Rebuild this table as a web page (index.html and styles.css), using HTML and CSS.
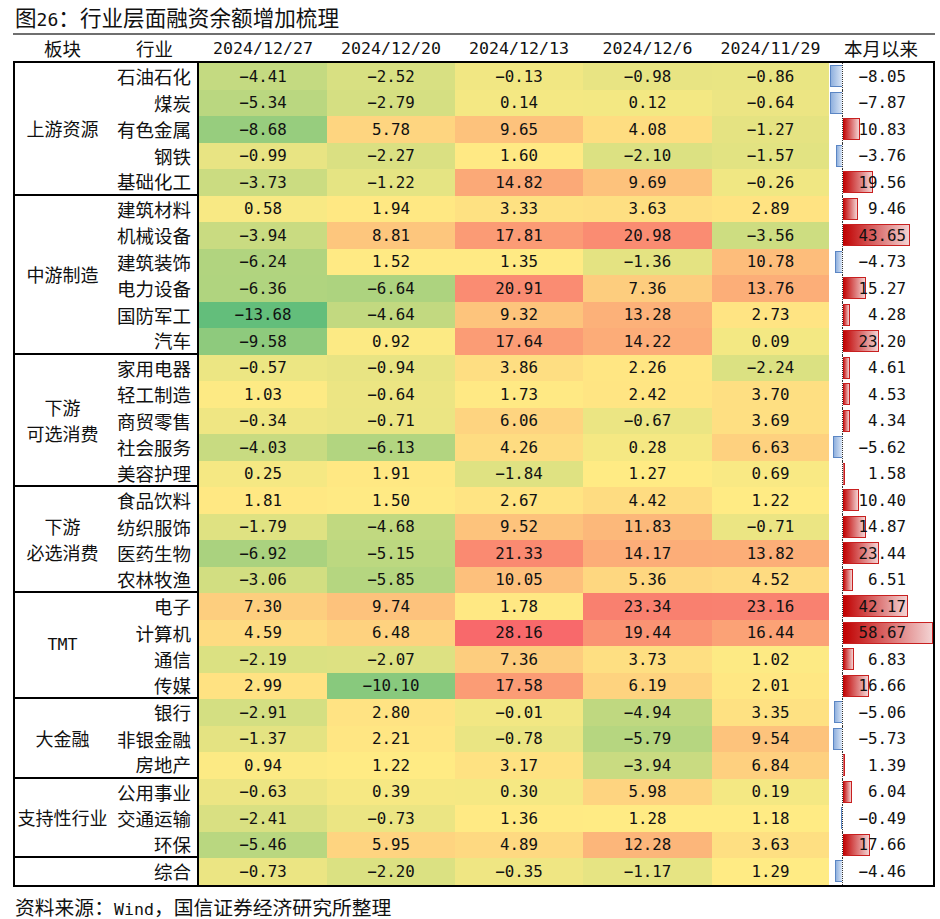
FILE: index.html
```html
<!DOCTYPE html>
<html lang="zh-CN">
<head>
<meta charset="utf-8">
<title>图26：行业层面融资余额增加梳理</title>
<link rel="stylesheet" href="styles.css">
</head>
<body>
<div class="page">
  <div class="title">图<span class="mono t">26</span>：行业层面融资余额增加梳理</div>

  <div class="grid thead">
    <div class="th">板块</div>
    <div class="th">行业</div>
    <div class="th d">2024/12/27</div>
    <div class="th d">2024/12/20</div>
    <div class="th d">2024/12/13</div>
    <div class="th d">2024/12/6</div>
    <div class="th d">2024/11/29</div>
    <div class="th">本月以来</div>
  </div>

  <div class="grid tbody">
    <div class="sec span5">上游资源</div>
    <div class="ind">石油石化</div><div class="v">−4.41</div><div class="v">−2.52</div><div class="v">−0.13</div><div class="v">−0.98</div><div class="v">−0.86</div>
    <div class="bar"><div class="track"><div class="neg"><i></i></div><div class="pos"><i></i></div></div><span class="num">−8.05</span></div>
    <div class="ind">煤炭</div><div class="v">−5.34</div><div class="v">−2.79</div><div class="v">0.14</div><div class="v">0.12</div><div class="v">−0.64</div>
    <div class="bar"><div class="track"><div class="neg"><i></i></div><div class="pos"><i></i></div></div><span class="num">−7.87</span></div>
    <div class="ind">有色金属</div><div class="v">−8.68</div><div class="v">5.78</div><div class="v">9.65</div><div class="v">4.08</div><div class="v">−1.27</div>
    <div class="bar"><div class="track"><div class="neg"><i></i></div><div class="pos"><i></i></div></div><span class="num">10.83</span></div>
    <div class="ind">钢铁</div><div class="v">−0.99</div><div class="v">−2.27</div><div class="v">1.60</div><div class="v">−2.10</div><div class="v">−1.57</div>
    <div class="bar"><div class="track"><div class="neg"><i></i></div><div class="pos"><i></i></div></div><span class="num">−3.76</span></div>
    <div class="ind end">基础化工</div><div class="v">−3.73</div><div class="v">−1.22</div><div class="v">14.82</div><div class="v">9.69</div><div class="v">−0.26</div>
    <div class="bar"><div class="track"><div class="neg"><i></i></div><div class="pos"><i></i></div></div><span class="num">19.56</span></div>

    <div class="sec span6">中游制造</div>
    <div class="ind">建筑材料</div><div class="v">0.58</div><div class="v">1.94</div><div class="v">3.33</div><div class="v">3.63</div><div class="v">2.89</div>
    <div class="bar"><div class="track"><div class="neg"><i></i></div><div class="pos"><i></i></div></div><span class="num">9.46</span></div>
    <div class="ind">机械设备</div><div class="v">−3.94</div><div class="v">8.81</div><div class="v">17.81</div><div class="v">20.98</div><div class="v">−3.56</div>
    <div class="bar"><div class="track"><div class="neg"><i></i></div><div class="pos"><i></i></div></div><span class="num">43.65</span></div>
    <div class="ind">建筑装饰</div><div class="v">−6.24</div><div class="v">1.52</div><div class="v">1.35</div><div class="v">−1.36</div><div class="v">10.78</div>
    <div class="bar"><div class="track"><div class="neg"><i></i></div><div class="pos"><i></i></div></div><span class="num">−4.73</span></div>
    <div class="ind">电力设备</div><div class="v">−6.36</div><div class="v">−6.64</div><div class="v">20.91</div><div class="v">7.36</div><div class="v">13.76</div>
    <div class="bar"><div class="track"><div class="neg"><i></i></div><div class="pos"><i></i></div></div><span class="num">15.27</span></div>
    <div class="ind">国防军工</div><div class="v">−13.68</div><div class="v">−4.64</div><div class="v">9.32</div><div class="v">13.28</div><div class="v">2.73</div>
    <div class="bar"><div class="track"><div class="neg"><i></i></div><div class="pos"><i></i></div></div><span class="num">4.28</span></div>
    <div class="ind end">汽车</div><div class="v">−9.58</div><div class="v">0.92</div><div class="v">17.64</div><div class="v">14.22</div><div class="v">0.09</div>
    <div class="bar"><div class="track"><div class="neg"><i></i></div><div class="pos"><i></i></div></div><span class="num">23.20</span></div>

    <div class="sec span5">下游<br>可选消费</div>
    <div class="ind">家用电器</div><div class="v">−0.57</div><div class="v">−0.94</div><div class="v">3.86</div><div class="v">2.26</div><div class="v">−2.24</div>
    <div class="bar"><div class="track"><div class="neg"><i></i></div><div class="pos"><i></i></div></div><span class="num">4.61</span></div>
    <div class="ind">轻工制造</div><div class="v">1.03</div><div class="v">−0.64</div><div class="v">1.73</div><div class="v">2.42</div><div class="v">3.70</div>
    <div class="bar"><div class="track"><div class="neg"><i></i></div><div class="pos"><i></i></div></div><span class="num">4.53</span></div>
    <div class="ind">商贸零售</div><div class="v">−0.34</div><div class="v">−0.71</div><div class="v">6.06</div><div class="v">−0.67</div><div class="v">3.69</div>
    <div class="bar"><div class="track"><div class="neg"><i></i></div><div class="pos"><i></i></div></div><span class="num">4.34</span></div>
    <div class="ind">社会服务</div><div class="v">−4.03</div><div class="v">−6.13</div><div class="v">4.26</div><div class="v">0.28</div><div class="v">6.63</div>
    <div class="bar"><div class="track"><div class="neg"><i></i></div><div class="pos"><i></i></div></div><span class="num">−5.62</span></div>
    <div class="ind end">美容护理</div><div class="v">0.25</div><div class="v">1.91</div><div class="v">−1.84</div><div class="v">1.27</div><div class="v">0.69</div>
    <div class="bar"><div class="track"><div class="neg"><i></i></div><div class="pos"><i></i></div></div><span class="num">1.58</span></div>

    <div class="sec span4">下游<br>必选消费</div>
    <div class="ind">食品饮料</div><div class="v">1.81</div><div class="v">1.50</div><div class="v">2.67</div><div class="v">4.42</div><div class="v">1.22</div>
    <div class="bar"><div class="track"><div class="neg"><i></i></div><div class="pos"><i></i></div></div><span class="num">10.40</span></div>
    <div class="ind">纺织服饰</div><div class="v">−1.79</div><div class="v">−4.68</div><div class="v">9.52</div><div class="v">11.83</div><div class="v">−0.71</div>
    <div class="bar"><div class="track"><div class="neg"><i></i></div><div class="pos"><i></i></div></div><span class="num">14.87</span></div>
    <div class="ind">医药生物</div><div class="v">−6.92</div><div class="v">−5.15</div><div class="v">21.33</div><div class="v">14.17</div><div class="v">13.82</div>
    <div class="bar"><div class="track"><div class="neg"><i></i></div><div class="pos"><i></i></div></div><span class="num">23.44</span></div>
    <div class="ind end">农林牧渔</div><div class="v">−3.06</div><div class="v">−5.85</div><div class="v">10.05</div><div class="v">5.36</div><div class="v">4.52</div>
    <div class="bar"><div class="track"><div class="neg"><i></i></div><div class="pos"><i></i></div></div><span class="num">6.51</span></div>

    <div class="sec span4 mono tmt">TMT</div>
    <div class="ind">电子</div><div class="v">7.30</div><div class="v">9.74</div><div class="v">1.78</div><div class="v">23.34</div><div class="v">23.16</div>
    <div class="bar"><div class="track"><div class="neg"><i></i></div><div class="pos"><i></i></div></div><span class="num">42.17</span></div>
    <div class="ind">计算机</div><div class="v">4.59</div><div class="v">6.48</div><div class="v">28.16</div><div class="v">19.44</div><div class="v">16.44</div>
    <div class="bar"><div class="track"><div class="neg"><i></i></div><div class="pos"><i></i></div></div><span class="num">58.67</span></div>
    <div class="ind">通信</div><div class="v">−2.19</div><div class="v">−2.07</div><div class="v">7.36</div><div class="v">3.73</div><div class="v">1.02</div>
    <div class="bar"><div class="track"><div class="neg"><i></i></div><div class="pos"><i></i></div></div><span class="num">6.83</span></div>
    <div class="ind end">传媒</div><div class="v">2.99</div><div class="v">−10.10</div><div class="v">17.58</div><div class="v">6.19</div><div class="v">2.01</div>
    <div class="bar"><div class="track"><div class="neg"><i></i></div><div class="pos"><i></i></div></div><span class="num">16.66</span></div>

    <div class="sec span3">大金融</div>
    <div class="ind">银行</div><div class="v">−2.91</div><div class="v">2.80</div><div class="v">−0.01</div><div class="v">−4.94</div><div class="v">3.35</div>
    <div class="bar"><div class="track"><div class="neg"><i></i></div><div class="pos"><i></i></div></div><span class="num">−5.06</span></div>
    <div class="ind">非银金融</div><div class="v">−1.37</div><div class="v">2.21</div><div class="v">−0.78</div><div class="v">−5.79</div><div class="v">9.54</div>
    <div class="bar"><div class="track"><div class="neg"><i></i></div><div class="pos"><i></i></div></div><span class="num">−5.73</span></div>
    <div class="ind end">房地产</div><div class="v">0.94</div><div class="v">1.22</div><div class="v">3.17</div><div class="v">−3.94</div><div class="v">6.84</div>
    <div class="bar"><div class="track"><div class="neg"><i></i></div><div class="pos"><i></i></div></div><span class="num">1.39</span></div>

    <div class="sec span3">支持性行业</div>
    <div class="ind">公用事业</div><div class="v">−0.63</div><div class="v">0.39</div><div class="v">0.30</div><div class="v">5.98</div><div class="v">0.19</div>
    <div class="bar"><div class="track"><div class="neg"><i></i></div><div class="pos"><i></i></div></div><span class="num">6.04</span></div>
    <div class="ind">交通运输</div><div class="v">−2.41</div><div class="v">−0.73</div><div class="v">1.36</div><div class="v">1.28</div><div class="v">1.18</div>
    <div class="bar"><div class="track"><div class="neg"><i></i></div><div class="pos"><i></i></div></div><span class="num">−0.49</span></div>
    <div class="ind end">环保</div><div class="v">−5.46</div><div class="v">5.95</div><div class="v">4.89</div><div class="v">12.28</div><div class="v">3.63</div>
    <div class="bar"><div class="track"><div class="neg"><i></i></div><div class="pos"><i></i></div></div><span class="num">17.66</span></div>

    <div class="sec last"></div>
    <div class="ind">综合</div><div class="v">−0.73</div><div class="v">−2.20</div><div class="v">−0.35</div><div class="v">−1.17</div><div class="v">1.29</div>
    <div class="bar"><div class="track"><div class="neg"><i></i></div><div class="pos"><i></i></div></div><span class="num">−4.46</span></div>
  </div>

  <div class="foot">资料来源：<span class="mono f">Wind</span>，国信证券经济研究所整理</div>
</div>
<script src="script.js"></script>
</body>
</html>
```

FILE: styles.css
```css
* { box-sizing: border-box; }
body {
  margin: 0;
  background: #fff;
  color: #111;
  font-family: "Noto Sans CJK SC", sans-serif;
}
.page {
  width: 935px;
  padding-left: 13px;
}
.mono { font-family: "DejaVu Sans Mono", monospace; }
.title {
  height: 33px;
  line-height: 33px;
  font-size: 21.6px;
  padding-left: 2px;
  white-space: nowrap;
}
.title .t { font-size: 18px; }

.grid {
  display: grid;
  grid-template-columns: 95px 89px 128px 128px 128px 129px 117px 104px;
}
.thead {
  border-top: 2px solid #6f6f6f;
  padding: 0 2px;
  height: 28px;
  width: 922px;
}
.th {
  display: flex;
  align-items: center;
  justify-content: center;
  font-size: 18.5px;
  white-space: nowrap;
}
.th.d {
  font-family: "DejaVu Sans Mono", monospace;
  font-size: 16.6px;
}
.tbody {
  width: 922px;
  border: 2px solid #000;
  grid-auto-rows: 26.5px;
}
.sec {
  display: flex;
  align-items: center;
  justify-content: center;
  text-align: center;
  font-size: 18px;
  line-height: 26px;
  border-bottom: 2px solid #000;
  white-space: nowrap;
}
.sec.last { border-bottom: 0; }
.sec.tmt { font-size: 16.6px; }
.span6 { grid-row: span 6; }
.span5 { grid-row: span 5; }
.span4 { grid-row: span 4; }
.span3 { grid-row: span 3; }
.ind {
  display: flex;
  align-items: center;
  justify-content: flex-end;
  padding-right: 6px;
  font-size: 18.5px;
  border-right: 2px solid #000;
  white-space: nowrap;
}
.ind.end { border-bottom: 2px solid #000; }
.v {
  display: flex;
  align-items: center;
  justify-content: center;
  font-family: "DejaVu Sans Mono", monospace;
  font-size: 15.8px;
  background: #ffeb84;
}
.bar {
  display: grid;
  background: #fff;
}
.track, .num { grid-area: 1 / 1; }
.track { display: flex; }
.neg {
  width: 13px;
  display: flex;
  align-items: center;
  justify-content: flex-end;
}
.pos {
  flex: 1;
  display: flex;
  align-items: center;
  border-left: 1px dotted #333;
}
.neg i, .pos i {
  display: block;
  height: 22px;
  width: 0;
}
.neg i.on {
  background: linear-gradient(to right, #8fb0de, #d9e5f5);
  border: 1px solid #5b86c4;
  border-right: 0;
}
.pos i.on {
  background: linear-gradient(to right, #c00000, #f3d3d3);
  border: 1px solid #c82020;
  border-left: 0;
}
.num {
  display: flex;
  align-items: center;
  justify-content: flex-end;
  padding-right: 27px;
  font-family: "DejaVu Sans Mono", monospace;
  font-size: 15.8px;
  position: relative;
}
.foot {
  margin-top: 8px;
  height: 24px;
  line-height: 24px;
  font-size: 19.8px;
  padding-left: 2px;
  white-space: nowrap;
}
.foot .f { font-size: 16.6px; }
```

FILE: script.js
```js
(function () {
  function num(t) { return parseFloat(t.replace('\u2212', '-')); }
  var cells = Array.prototype.slice.call(document.querySelectorAll('.v'));
  var vals = cells.map(function (c) { return num(c.textContent); });
  var sorted = vals.slice().sort(function (a, b) { return a - b; });
  var min = sorted[0], max = sorted[sorted.length - 1];
  var n = sorted.length;
  var mid = n % 2 ? sorted[(n - 1) / 2] : (sorted[n / 2 - 1] + sorted[n / 2]) / 2;
  var G = [99, 190, 123], Y = [255, 235, 132], R = [248, 105, 107];
  function mix(a, b, t) {
    return 'rgb(' + a.map(function (x, i) { return Math.round(x + (b[i] - x) * t); }).join(',') + ')';
  }
  cells.forEach(function (c, i) {
    var v = vals[i];
    c.style.background = v <= mid ? mix(G, Y, (v - min) / (mid - min)) : mix(Y, R, (v - mid) / (max - mid));
  });
  var bars = Array.prototype.slice.call(document.querySelectorAll('.bar'));
  var bv = bars.map(function (b) { return num(b.querySelector('.num').textContent); });
  var bmax = Math.max.apply(null, bv);
  var scale = 90 / bmax;
  bars.forEach(function (b, i) {
    var v = bv[i];
    var el = b.querySelector(v < 0 ? '.neg i' : '.pos i');
    el.classList.add('on');
    el.style.width = (Math.abs(v) * scale).toFixed(1) + 'px';
  });
})();
```
